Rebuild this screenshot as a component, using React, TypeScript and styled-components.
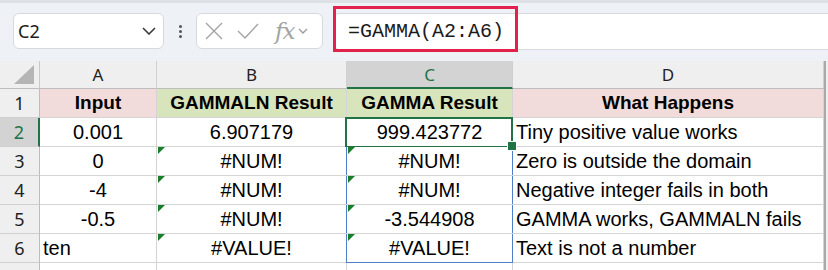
import React from "react";
import styled, { createGlobalStyle, css } from "styled-components";

const GlobalStyle = createGlobalStyle`
  html, body {
    margin: 0;
    padding: 0;
    background: #ffffff;
    overflow: hidden;
  }
  * {
    box-sizing: border-box;
  }
`;

type Align = "left" | "center";

type Row = {
  cells: { text: string; align?: Align; flag?: boolean }[];
};

const headers = [
  { text: "Input", bg: "#f2dcdb" },
  { text: "GAMMALN Result", bg: "#d8e4bc" },
  { text: "GAMMA Result", bg: "#d8e4bc" },
  { text: "What Happens", bg: "#f2dcdb" },
];

const rows: Row[] = [
  {
    cells: [
      { text: "0.001" },
      { text: "6.907179" },
      { text: "999.423772" },
      { text: "Tiny positive value works", align: "left" },
    ],
  },
  {
    cells: [
      { text: "0" },
      { text: "#NUM!", flag: true },
      { text: "#NUM!", flag: true },
      { text: "Zero is outside the domain", align: "left" },
    ],
  },
  {
    cells: [
      { text: "-4" },
      { text: "#NUM!", flag: true },
      { text: "#NUM!", flag: true },
      { text: "Negative integer fails in both", align: "left" },
    ],
  },
  {
    cells: [
      { text: "-0.5" },
      { text: "#NUM!", flag: true },
      { text: "-3.544908", flag: true },
      { text: "GAMMA works, GAMMALN fails", align: "left" },
    ],
  },
  {
    cells: [
      { text: "ten", align: "left" },
      { text: "#VALUE!", flag: true },
      { text: "#VALUE!", flag: true },
      { text: "Text is not a number", align: "left" },
    ],
  },
];

const App = () => {
  return (
    <>
      <GlobalStyle />
      <Page>
        <Toolbar>
          <NameBox>
            <span>C2</span>
            <svg width="14" height="8" viewBox="0 0 14 8">
              <path d="M1 1 L7 7 L13 1" fill="none" stroke="#3b3b3b" strokeWidth="1.6" />
            </svg>
          </NameBox>
          <Grip>
            <i />
            <i />
            <i />
          </Grip>
          <FxBox>
            <svg width="18" height="18" viewBox="0 0 18 18">
              <path d="M1 1 L17 17 M17 1 L1 17" stroke="#a3a3a3" strokeWidth="1.4" />
            </svg>
            <svg width="22" height="16" viewBox="0 0 22 16">
              <path d="M1 8 L8 15 L21 1" fill="none" stroke="#a3a3a3" strokeWidth="1.4" />
            </svg>
            <FxText>fx</FxText>
            <svg width="10" height="6" viewBox="0 0 10 6">
              <path d="M1 1 L5 5 L9 1" fill="none" stroke="#9a9a9a" strokeWidth="1.3" />
            </svg>
          </FxBox>
          <FormulaInput>
            <FormulaText>=GAMMA(A2:A6)</FormulaText>
            <Highlight />
          </FormulaInput>
        </Toolbar>
        <Sheet>
          <Corner>
            <svg width="20" height="19" viewBox="0 0 20 19">
              <path d="M20 0 L20 19 L0 19 Z" fill="#b5b5b5" />
            </svg>
          </Corner>
          {["A", "B", "C", "D"].map((c) => (
            <ColHead key={c} $active={c === "C"}>
              {c}
            </ColHead>
          ))}
          <Edge />

          <RowHead>1</RowHead>
          {headers.map((h) => (
            <Cell key={h.text} $bg={h.bg} $bold>
              {h.text}
            </Cell>
          ))}
          <Edge />

          {rows.map((r, i) => (
            <React.Fragment key={i}>
              <RowHead $active={i === 0}>{i + 2}</RowHead>
              {r.cells.map((c, j) => (
                <Cell
                  key={j}
                  $align={c.align ?? "center"}
                  $flag={c.flag}
                  $selected={i === 0 && j === 2}
                  $spill={j === 2 && i > 0 ? (i === rows.length - 1 ? "last" : "mid") : undefined}
                >
                  {c.text}
                </Cell>
              ))}
              <Edge />
            </React.Fragment>
          ))}

          <RowHead />
          <Cell />
          <Cell />
          <Cell />
          <Cell />
          <Edge />
        </Sheet>
      </Page>
    </>
  );
};

const Page = styled.div`
  width: 828px;
  height: 270px;
  overflow: hidden;
  display: flex;
  flex-direction: column;
  background: #ffffff;
`;

const Toolbar = styled.div`
  height: 61px;
  flex-shrink: 0;
  display: flex;
  align-items: flex-start;
  padding: 10px 0 0 13px;
  background: #eef1f5;
  border-top: 3px solid #dde1e6;
`;

const NameBox = styled.div`
  width: 151px;
  height: 36px;
  display: flex;
  align-items: center;
  justify-content: space-between;
  padding: 0 7px 0 4px;
  background: #ffffff;
  border: 1px solid #d6d9dd;
  border-radius: 6px;
  font-family: "Noto Sans", "Open Sans", sans-serif;
  font-size: 18px;
  color: #1b1b1b;
`;

const Grip = styled.div`
  width: 32px;
  height: 36px;
  display: flex;
  flex-direction: column;
  align-items: center;
  justify-content: center;
  gap: 2px;

  i {
    width: 3px;
    height: 3px;
    border-radius: 50%;
    background: #555555;
  }
`;

const FxBox = styled.div`
  width: 127px;
  height: 36px;
  display: flex;
  align-items: center;
  padding: 0 0 0 8px;
  background: #ffffff;
  border: 1px solid #d6d9dd;
  border-radius: 6px;

  svg:nth-child(1) {
    margin-right: 14px;
  }
  svg:nth-child(2) {
    margin-right: 16px;
  }
`;

const FxText = styled.span`
  font-family: "DejaVu Serif", "Liberation Serif", serif;
  font-style: italic;
  font-size: 23px;
  line-height: 1;
  color: #a3a3a3;
  margin-right: 4px;
  letter-spacing: -1px;
`;

const FormulaInput = styled.div`
  position: relative;
  flex: 1;
  height: 37px;
  margin-left: 10px;
  display: flex;
  align-items: center;
  padding-left: 14px;
  background: #ffffff;
  border: 1px solid #d6d9dd;
  border-right: none;
  border-radius: 6px 0 0 6px;
`;

const FormulaText = styled.span`
  font-family: "Liberation Mono", "DejaVu Sans Mono", monospace;
  font-size: 20px;
  color: #1b1b1b;
`;

const Highlight = styled.div`
  position: absolute;
  left: -1px;
  top: -8px;
  width: 185px;
  height: 46px;
  border: 3px solid #e0224c;
  pointer-events: none;
`;

const Sheet = styled.div`
  display: grid;
  grid-template-columns: 40px 117px 190px 166px 311px 4px;
  grid-template-rows: 28px repeat(7, 29px);
  background: #ffffff;
`;

const Corner = styled.div`
  display: flex;
  align-items: flex-end;
  justify-content: flex-end;
  padding: 0 5px 4px 0;
  background: #efefef;
  border-right: 1px solid #c9c9c9;
  border-bottom: 1px solid #bdbdbd;
`;

const headText = css`
  font-family: "Noto Sans", "Open Sans", sans-serif;
  font-size: 17px;
  color: #222222;
  display: flex;
  align-items: center;
  justify-content: center;
`;

const ColHead = styled.div<{ $active?: boolean }>`
  ${headText}
  background: ${(p) => (p.$active ? "#d3d3d3" : "#efefef")};
  color: ${(p) => (p.$active ? "#217346" : "#222222")};
  border-right: 1px solid #d0d0d0;
  border-bottom: ${(p) => (p.$active ? "2px solid #217346" : "1px solid #bdbdbd")};
`;

const RowHead = styled.div<{ $active?: boolean }>`
  ${headText}
  font-size: 18px;
  background: ${(p) => (p.$active ? "#d3d3d3" : "#efefef")};
  color: ${(p) => (p.$active ? "#217346" : "#222222")};
  border-right: ${(p) => (p.$active ? "2px solid #217346" : "1px solid #bdbdbd")};
  border-bottom: 1px solid #d0d0d0;
`;

const Edge = styled.div`
  background: #efefef;
  border-left: 2px solid #a9a9a9;
`;

const Cell = styled.div<{
  $align?: Align;
  $bg?: string;
  $bold?: boolean;
  $flag?: boolean;
  $selected?: boolean;
  $spill?: "mid" | "last";
}>`
  position: relative;
  display: flex;
  align-items: center;
  justify-content: ${(p) => (p.$align === "left" ? "flex-start" : "center")};
  padding: 0 3px;
  white-space: nowrap;
  font-family: "Liberation Sans", Arial, sans-serif;
  font-size: ${(p) => (p.$bold ? "19px" : "20px")};
  font-weight: ${(p) => (p.$bold ? 700 : 400)};
  color: #000000;
  background: ${(p) => p.$bg ?? "#ffffff"};
  border-right: 1px solid #d4d4d4;
  border-bottom: 1px solid #d4d4d4;

  ${(p) =>
    p.$flag &&
    css`
      &::before {
        content: "";
        position: absolute;
        left: 1px;
        top: 0;
        border-top: 7px solid #1a7d2b;
        border-right: 7px solid transparent;
      }
    `}

  ${(p) =>
    p.$selected &&
    css`
      &::after {
        content: "";
        position: absolute;
        left: -2px;
        top: -1px;
        right: -1px;
        bottom: -2px;
        border: 2px solid #217346;
      }
      &::before {
        content: "";
        position: absolute;
        right: -5px;
        bottom: -5px;
        width: 8px;
        height: 8px;
        background: #217346;
        border: 1px solid #ffffff;
        z-index: 2;
      }
    `}

  ${(p) =>
    p.$spill &&
    css`
      &::after {
        content: "";
        position: absolute;
        left: -1px;
        top: 0;
        right: -1px;
        bottom: ${p.$spill === "last" ? "-1px" : "0"};
        border-left: 1.5px solid #4f7fc9;
        border-right: 1.5px solid #4f7fc9;
        border-bottom: ${p.$spill === "last" ? "1.5px solid #4f7fc9" : "none"};
      }
    `}
`;

export default App;
